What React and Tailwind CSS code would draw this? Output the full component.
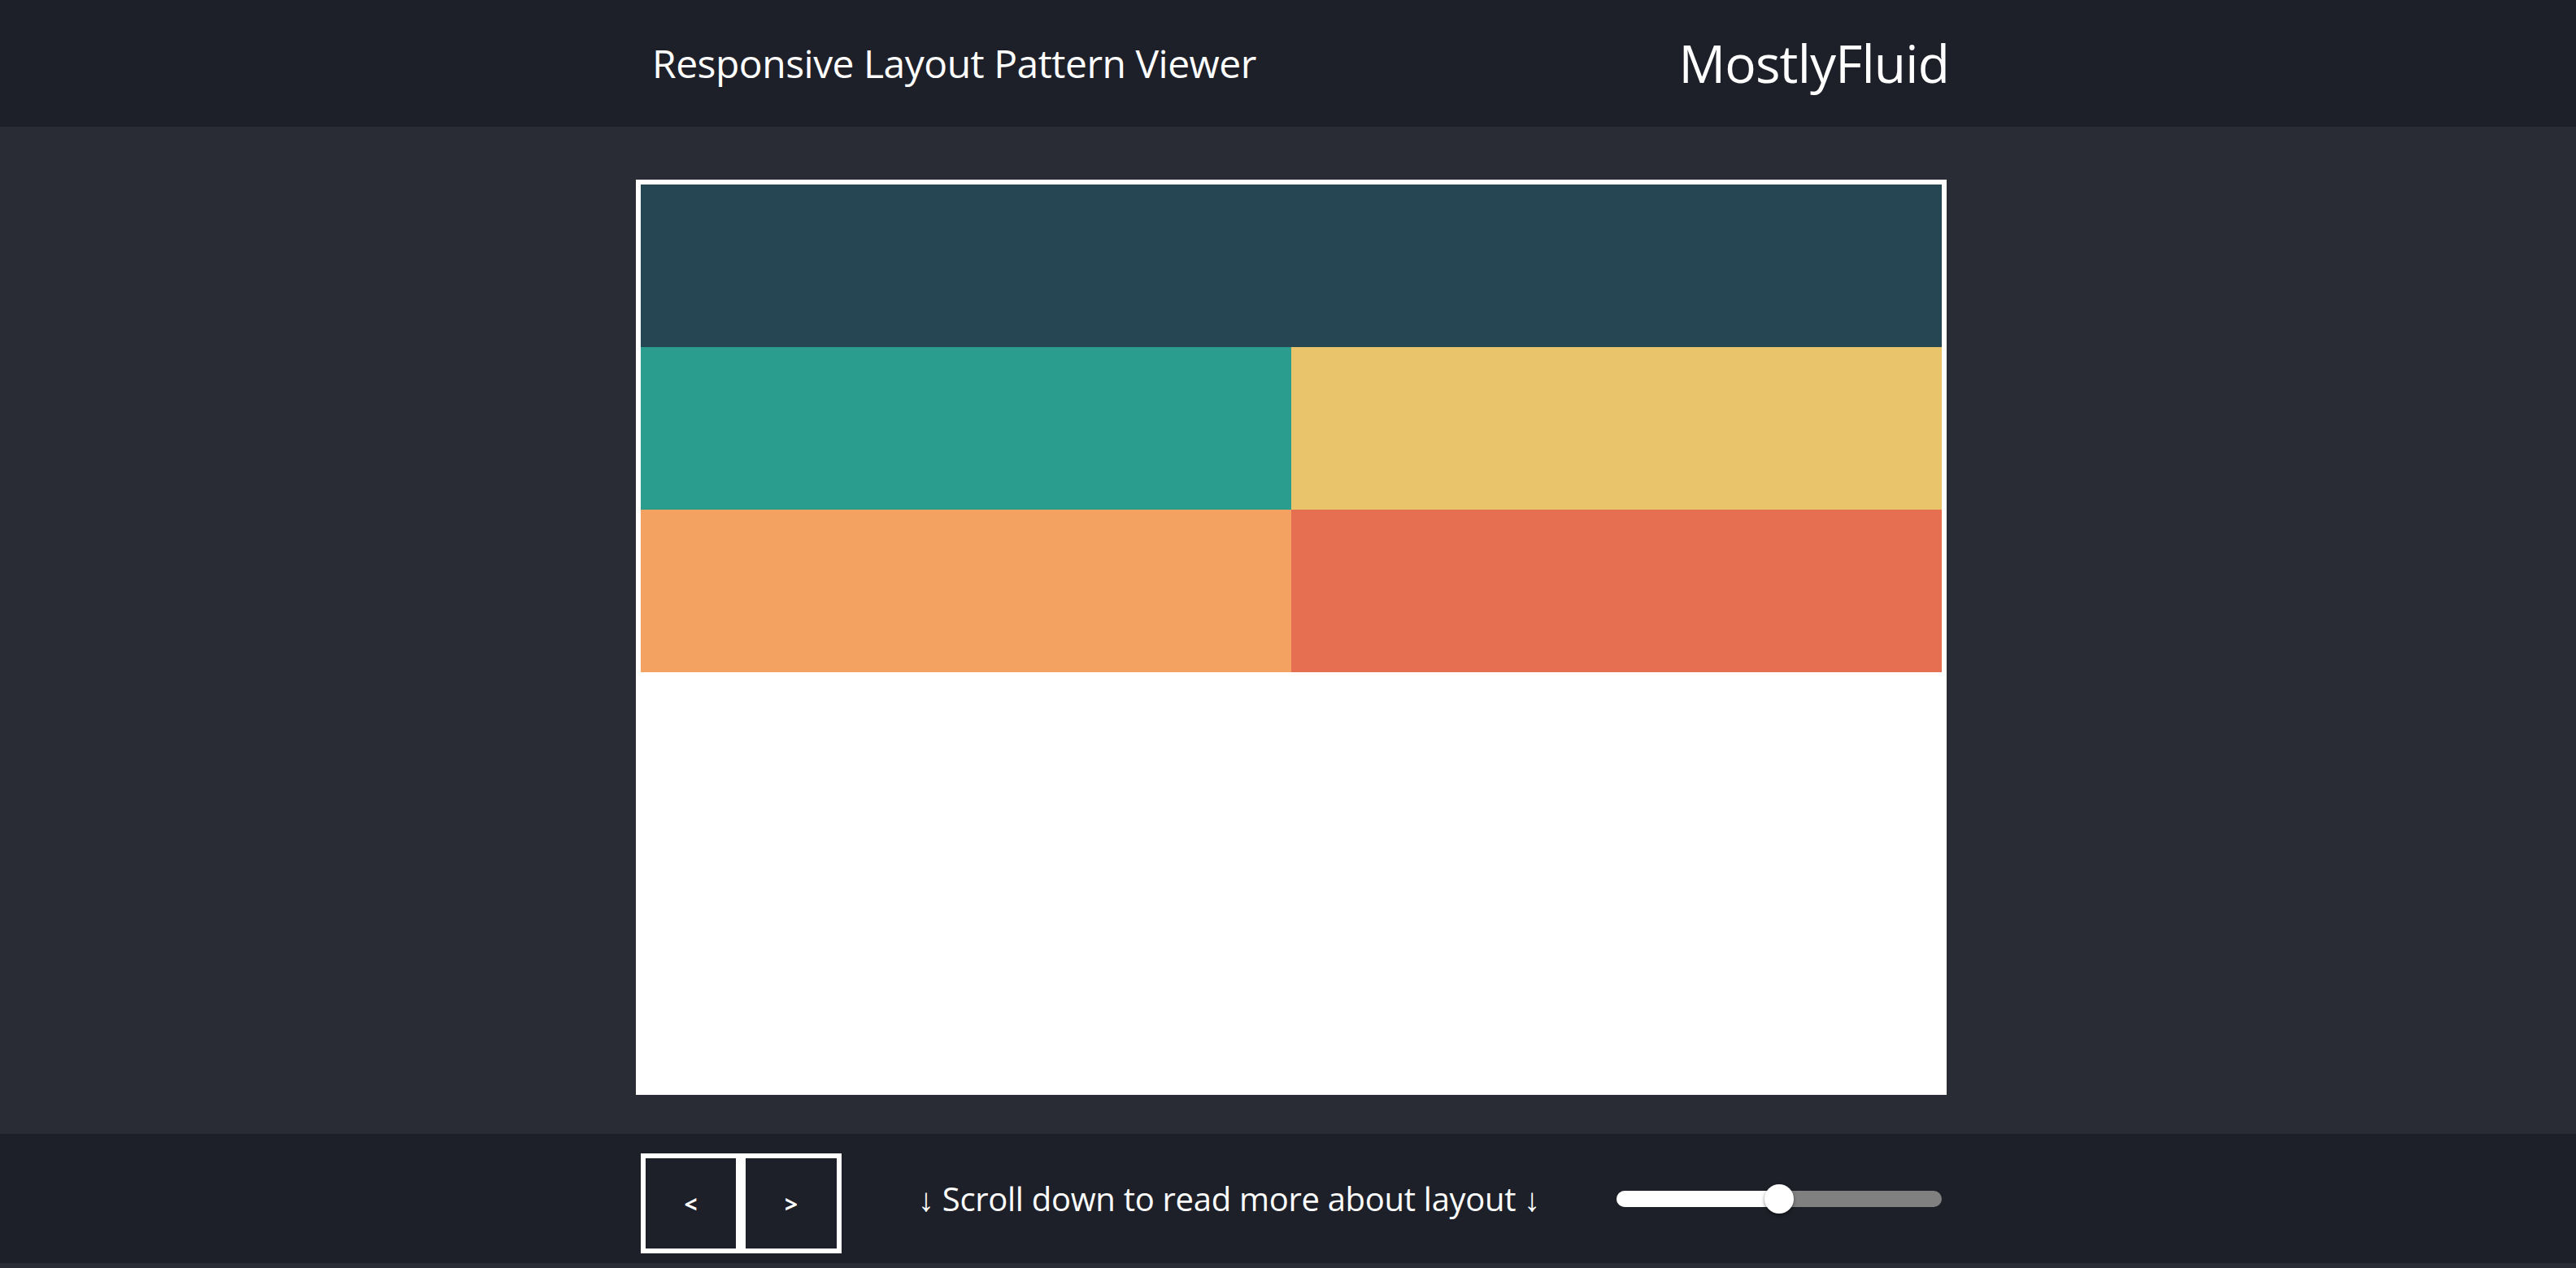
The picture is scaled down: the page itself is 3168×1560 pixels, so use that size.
import React, { useState } from 'react'

const rows = [
  [{ color: 'bg-[#264653]', span: 'col-span-2' }],
  [
    { color: 'bg-[#2a9d8f]', span: '' },
    { color: 'bg-[#e9c46a]', span: '' },
  ],
  [
    { color: 'bg-[#f4a261]', span: '' },
    { color: 'bg-[#e76f51]', span: '' },
  ],
]

function Header() {
  return (
    <header className="h-[156px] bg-[#1e2029] text-white">
      <div className="w-[1620px] mx-auto pl-[8px] h-full flex items-center justify-between">
        <h1 className="pl-[20px] text-[48px] font-normal leading-none tracking-[-0.5px]">
          Responsive Layout Pattern Viewer
        </h1>
        <div className="-mr-[3px] text-[64px] leading-none tracking-[-0.8px]">MostlyFluid</div>
      </div>
    </header>
  )
}

function Preview() {
  const cells = rows.flat()

  return (
    <div className="w-[1612px] h-[1126px] border-[6px] border-white bg-white">
      <div className="grid grid-cols-2 auto-rows-[200px]">
        {cells.map((cell, i) => (
          <div key={i} className={`${cell.color} ${cell.span}`} />
        ))}
      </div>
    </div>
  )
}

function Slider({ value }) {
  return (
    <div className="relative w-[400px] h-[20px] rounded-full bg-[#808080]">
      <div className="h-full rounded-full bg-white" style={{ width: `${value}%` }} />
      <div
        className="absolute top-1/2 w-[36px] h-[36px] -translate-x-1/2 -translate-y-1/2 rounded-full bg-white shadow-[0_2px_4px_rgba(0,0,0,0.45)]"
        style={{ left: `${value}%` }}
      />
    </div>
  )
}

function Footer() {
  const [value] = useState(50)

  return (
    <footer className="h-[159px] bg-[#1e2029] text-white">
      <div className="w-[1620px] mx-auto pl-[14px] pr-[6px] h-full flex items-center justify-between">
        <div className="flex mt-[12px]">
          <button className="w-[123px] h-[123px] border-[6px] border-white bg-[#1e2029] text-[28px] font-bold leading-none">
            &lt;
          </button>
          <button className="w-[124px] h-[123px] border-[6px] border-white bg-[#1e2029] text-[28px] font-bold leading-none">
            &gt;
          </button>
        </div>

        <p className="text-[40px] leading-none tracking-[-0.3px]">
          ↓ Scroll down to read more about layout ↓
        </p>

        <Slider value={value} />
      </div>
    </footer>
  )
}

export default function App() {
  return (
    <div className="min-h-screen bg-[#292c35] font-['Open_Sans',sans-serif]">
      <Header />

      <main className="pt-[65px] pb-[48px]">
        <div className="w-[1620px] mx-auto pl-[8px]">
          <Preview />
        </div>
      </main>

      <Footer />

      <div className="h-[40px]" />
    </div>
  )
}
